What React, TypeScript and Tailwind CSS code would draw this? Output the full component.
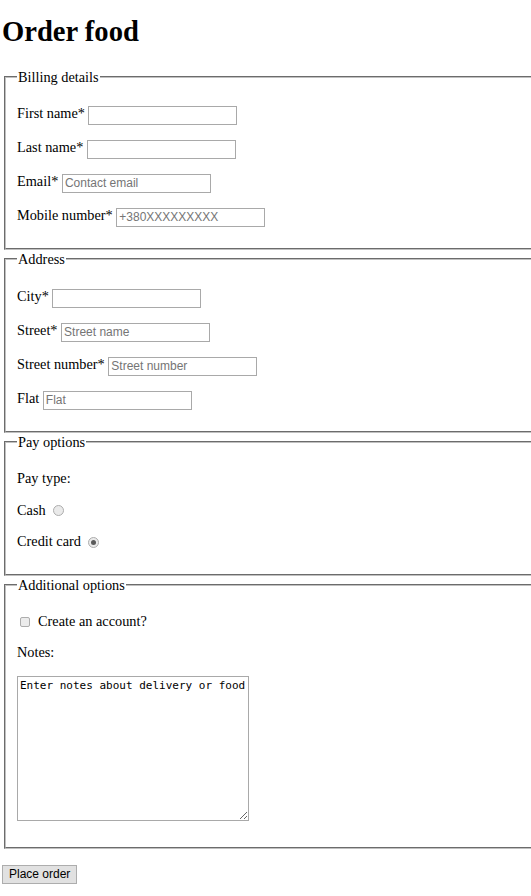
import { useState } from 'react';

const serif = "font-['Liberation_Serif','Times_New_Roman',serif]";

const inputCls =
  "w-[149px] h-[19px] border border-[#a9a9a9] bg-white px-[2px] text-[12px] font-['Liberation_Sans',Arial,sans-serif] text-black placeholder:text-[#757575] outline-none align-middle";

function Field({ label, placeholder }: { label: string; placeholder?: string }) {
  return (
    <div className="flex h-[34px] items-center">
      <label className="whitespace-nowrap">
        {label}{' '}
        <input type="text" placeholder={placeholder} className={inputCls} />
      </label>
    </div>
  );
}

function Section({
  legend,
  children,
  body,
}: {
  legend: string;
  children: React.ReactNode;
  body: string;
}) {
  return (
    <fieldset className="ml-[2px] w-[580px] border-2 border-[#c0c0c0] [border-style:groove] px-[11px]">
      <legend className="px-[1px] leading-[18px]">{legend}</legend>
      <div className={body}>{children}</div>
    </fieldset>
  );
}

function Radio({ checked, onClick }: { checked: boolean; onClick: () => void }) {
  return (
    <span
      onClick={onClick}
      className="inline-flex h-[11px] w-[11px] items-center justify-center rounded-full border border-[#adadad] bg-[#eaeaea] align-middle"
    >
      {checked && <span className="h-[5px] w-[5px] rounded-full bg-[#5a5a5a]" />}
    </span>
  );
}

export default function App() {
  const [pay, setPay] = useState<'cash' | 'card'>('card');
  const [account, setAccount] = useState(false);

  return (
    <div className={`w-full overflow-hidden pl-[2px] pb-[12px] text-[14.3px] text-black ${serif}`}>
      <h1 className="mt-[13px] mb-[18px] text-[28.6px] font-bold leading-[37px]">Order food</h1>

      <form onSubmit={(e) => e.preventDefault()}>
        <Section legend="Billing details" body="pt-[11px] pb-[15px]">
          <Field label="First name*" />
          <Field label="Last name*" />
          <Field label="Email*" placeholder="Contact email" />
          <Field label="Mobile number*" placeholder="+380XXXXXXXXX" />
        </Section>

        <Section legend="Address" body="pt-[12px] pb-[15px]">
          <Field label="City*" />
          <Field label="Street*" placeholder="Street name" />
          <Field label="Street number*" placeholder="Street number" />
          <Field label="Flat" placeholder="Flat" />
        </Section>

        <Section legend="Pay options" body="pt-[12px] pb-[16px]">
          <div className="flex h-[32px] items-center">Pay type:</div>
          <div className="flex h-[31px] items-center">
            <span>Cash</span>
            <span className="ml-[7px] flex">
              <Radio checked={pay === 'cash'} onClick={() => setPay('cash')} />
            </span>
          </div>
          <div className="flex h-[32px] items-center">
            <span>Credit card</span>
            <span className="ml-[7px] flex">
              <Radio checked={pay === 'card'} onClick={() => setPay('card')} />
            </span>
          </div>
        </Section>

        <Section legend="Additional options" body="pt-[12px] pb-[26px]">
          <div className="flex h-[32px] items-center">
            <span
              onClick={() => setAccount(!account)}
              className="ml-[3px] flex h-[10px] w-[10px] items-center justify-center rounded-[2px] border border-[#adadad] bg-[#ececec] text-[9px] leading-none"
            >
              {account ? '✓' : ''}
            </span>
            <span className="ml-[8px]">Create an account?</span>
          </div>
          <div className="flex h-[30px] items-center">Notes:</div>
          <textarea
            defaultValue="Enter notes about delivery or food"
            className="mt-[8px] block h-[145px] w-[232px] border border-[#a9a9a9] px-[2px] py-[2px] font-['DejaVu_Sans_Mono',monospace] text-[11px] leading-[13px] text-black outline-none"
          />
        </Section>

        <button
          type="submit"
          className="mt-[16px] h-[19px] whitespace-nowrap border border-[#adadad] bg-[#e1e1e1] px-[6px] text-[12px] leading-[15px] font-['Liberation_Sans',Arial,sans-serif] text-black"
        >
          Place order
        </button>
      </form>
    </div>
  );
}
